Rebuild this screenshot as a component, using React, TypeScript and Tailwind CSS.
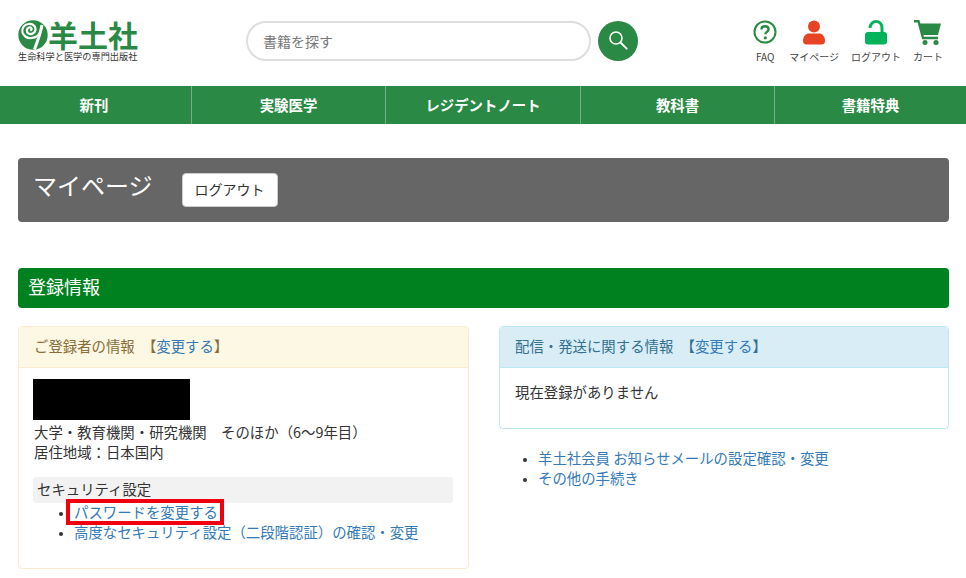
const font = "font-['Noto_Sans_CJK_JP','Noto_Sans',sans-serif]";

const navItems = ["新刊", "実験医学", "レジデントノート", "教科書", "書籍特典"];

function Logo() {
  return (
    <div className="w-[121px] shrink-0">
      <div className="flex items-center h-[30px]">
        <svg width="30" height="30" viewBox="0 0 30 30" className="shrink-0">
          <circle cx="15" cy="15" r="14.7" fill="#2a8a45" />
          <path
            d="M13 10C14.500 9 13 7 11 7.500C8.500 8 8 12 10.500 13.500C13.500 15 17.500 13 17.500 9C17.500 5.500 14 3.500 10.500 4C6 4.500 3.500 8.500 4.500 12.500C5.500 16 9 18.500 13 18"
            fill="none"
            stroke="#fff"
            strokeWidth="2.200"
            strokeLinecap="round"
          />
          <path d="M24 5C23 11 20 20 16.500 29.500" fill="none" stroke="#fff" strokeWidth="3" />
          <path d="M13 18C17 18 20 16 21.500 13" fill="none" stroke="#fff" strokeWidth="2.200" />
        </svg>
        <span className="-mt-[2px] text-[30px] leading-[30px] font-bold text-[#2a8a45] whitespace-nowrap">羊土社</span>
      </div>
      <div className="text-[9.2px] leading-[12px] text-[#333] whitespace-nowrap">生命科学と医学の専門出版社</div>
    </div>
  );
}

function HeaderIcon({ label, children }: { label: string; children: React.ReactNode }) {
  return (
    <div className="flex flex-col items-center">
      <div className="h-[26px] flex items-center justify-center">{children}</div>
      <div className="mt-[5px] text-[10px] leading-[14px] text-[#444] whitespace-nowrap">{label}</div>
    </div>
  );
}

function IconLinks() {
  return (
    <div className="ml-auto flex items-start gap-[12px] pt-[19px] pr-[23px]">
      <HeaderIcon label="FAQ">
        <svg width="24" height="24" viewBox="0 0 24 24">
          <circle cx="12" cy="12" r="10.500" fill="none" stroke="#2a8a45" strokeWidth="2" />
          <path d="M8.500 9.500c0-2 1.500-3.300 3.500-3.300s3.600 1.200 3.600 3.100c0 2.700-3.200 2.500-3.200 5" fill="none" stroke="#2a8a45" strokeWidth="2.400" />
          <circle cx="12.300" cy="17.800" r="1.600" fill="#2a8a45" />
        </svg>
      </HeaderIcon>
      <HeaderIcon label="マイページ">
        <svg width="22" height="25" viewBox="0 0 22 25">
          <circle cx="11" cy="6.500" r="6" fill="#e84424" />
          <path d="M0 21c0-5 3-7.500 6-7.500h10c3 0 6 2.500 6 7.500 0 2.500-1.500 3.500-3.500 3.500h-15C1.500 24.500 0 23.500 0 21z" fill="#e84424" />
        </svg>
      </HeaderIcon>
      <HeaderIcon label="ログアウト">
        <svg width="22" height="25" viewBox="0 0 22 25">
          <rect x="0" y="12" width="22" height="12.500" rx="3" fill="#00b25a" />
          <path d="M5 8C5 4 8 1.500 11 1.500C14.500 1.500 17 4 17 8V13" fill="none" stroke="#00b25a" strokeWidth="3" />
        </svg>
      </HeaderIcon>
      <HeaderIcon label="カート">
        <svg width="28" height="25" viewBox="0 0 28 25">
          <path d="M0 1.200h4.500l4.500 16.800h15" fill="none" stroke="#2a8a45" strokeWidth="2.400" />
          <path d="M5.500 3.500H27L24 15H8.500z" fill="#2a8a45" />
          <circle cx="11" cy="22.500" r="2.500" fill="#2a8a45" />
          <circle cx="22" cy="22.500" r="2.500" fill="#2a8a45" />
        </svg>
      </HeaderIcon>
    </div>
  );
}

export default function App() {
  return (
    <div className={`${font} w-[966px] h-[578px] overflow-hidden bg-white text-[14.4px] leading-[20px] text-[#333]`}>
      {/* ヘッダー */}
      <header className="h-[86px] flex items-start">
        <div className="pl-[18px] pt-[20px]">
          <Logo />
        </div>
        <div className="ml-[107px] mt-[21px] flex items-center gap-[7px]">
          <div className="w-[345px] h-[40px] rounded-full border-2 border-[#dcdfdd] flex items-center pl-[15px] pb-[1px] text-[14px] text-[#777]">
            書籍を探す
          </div>
          <div className="w-[40px] h-[40px] rounded-full bg-[#2a8a45] flex items-center justify-center">
            <svg width="22" height="22" viewBox="0 0 22 22">
              <circle cx="9" cy="8" r="6" fill="none" stroke="#fff" strokeWidth="1.600" />
              <path d="M13.500 12.500L19.700 18.700" stroke="#fff" strokeWidth="1.800" strokeLinecap="round" />
            </svg>
          </div>
        </div>
        <IconLinks />
      </header>

      {/* グローバルナビ */}
      <nav className="h-[38px] bg-[#2a8a45] grid grid-cols-[192px_194px_195px_194px_1fr]">
        {navItems.map((item, i) => (
          <div
            key={item}
            className={`flex items-center justify-center pb-[1px] text-white font-bold ${i < 4 ? "border-r border-[#74b088]" : ""} ${i === 0 ? "pr-[3px]" : ""}`}
          >
            {item}
          </div>
        ))}
      </nav>

      <main className="px-[18px] w-[967px]">
        <div className="mt-[34px] h-[64px] bg-[#666] rounded flex items-start pl-[15px]">
          <h1 className="mt-[9px] text-[24px] leading-[36px] text-white">マイページ</h1>
          <button className="ml-[29px] mt-[15px] w-[96px] h-[34px] pb-[2px] bg-white border border-[#ccc] rounded text-[14px] text-[#333]">
            ログアウト
          </button>
        </div>

        <h2 className="mt-[46px] h-[40px] pb-[5px] bg-[#00811f] rounded pl-[10px] flex items-center text-[18px] text-white">登録情報</h2>

        <div className="mt-[18px] grid grid-cols-[451px_450px] gap-[30px] items-start">
          {/* 左パネル */}
          <section className="h-[243px] rounded border border-[#faebcc]">
            <div className="h-[41px] pb-[2px] bg-[#fcf8e3] border-b border-[#faebcc] flex items-center pl-[15px] text-[#8a6d3b]">
              ご登録者の情報　【<a className="text-[#337ab7]">変更する</a>】
            </div>
            <div className="pt-[11px] pl-[15px] pr-[15px]">
              <div className="-ml-[1px] w-[157px] h-[41px] bg-black" />
              <p className="mt-[2px]">大学・教育機関・研究機関　そのほか（6〜9年目）</p>
              <p>居住地域：日本国内</p>
              <div className="-ml-[1px] mt-[15px] h-[26px] pb-[2px] bg-[#f2f2f2] rounded-[3px] pl-[4px] flex items-center">セキュリティ設定</div>
              <ul className="list-disc pl-[40px] -mt-[1px] marker:text-[#333] marker:text-[11px]">
                <li>
                  <a className="relative inline-block text-[#337ab7]">
                    <span className="absolute -left-[8px] -right-[6px] -top-[3px] -bottom-[3px] border-[4px] border-[#f0000f]" />
                    パスワードを変更する
                  </a>
                </li>
                <li>
                  <a className="text-[#337ab7]">高度なセキュリティ設定（二段階認証）の確認・変更</a>
                </li>
              </ul>
            </div>
          </section>

          {/* 右カラム */}
          <div>
            <section className="h-[103px] rounded border border-[#bce8f1]">
              <div className="h-[41px] pb-[2px] bg-[#d9edf7] border-b border-[#bce8f1] flex items-center pl-[15px] text-[#31708f]">
                配信・発送に関する情報　【<a className="text-[#337ab7]">変更する</a>】
              </div>
              <p className="pt-[14px] pl-[15px]">現在登録がありません</p>
            </section>
            <ul className="mt-[19px] list-disc pl-[39px] marker:text-[#333] marker:text-[11px]">
              <li>
                <a className="text-[#337ab7]">羊土社会員 お知らせメールの設定確認・変更</a>
              </li>
              <li>
                <a className="text-[#337ab7]">その他の手続き</a>
              </li>
            </ul>
          </div>
        </div>
      </main>
    </div>
  );
}
